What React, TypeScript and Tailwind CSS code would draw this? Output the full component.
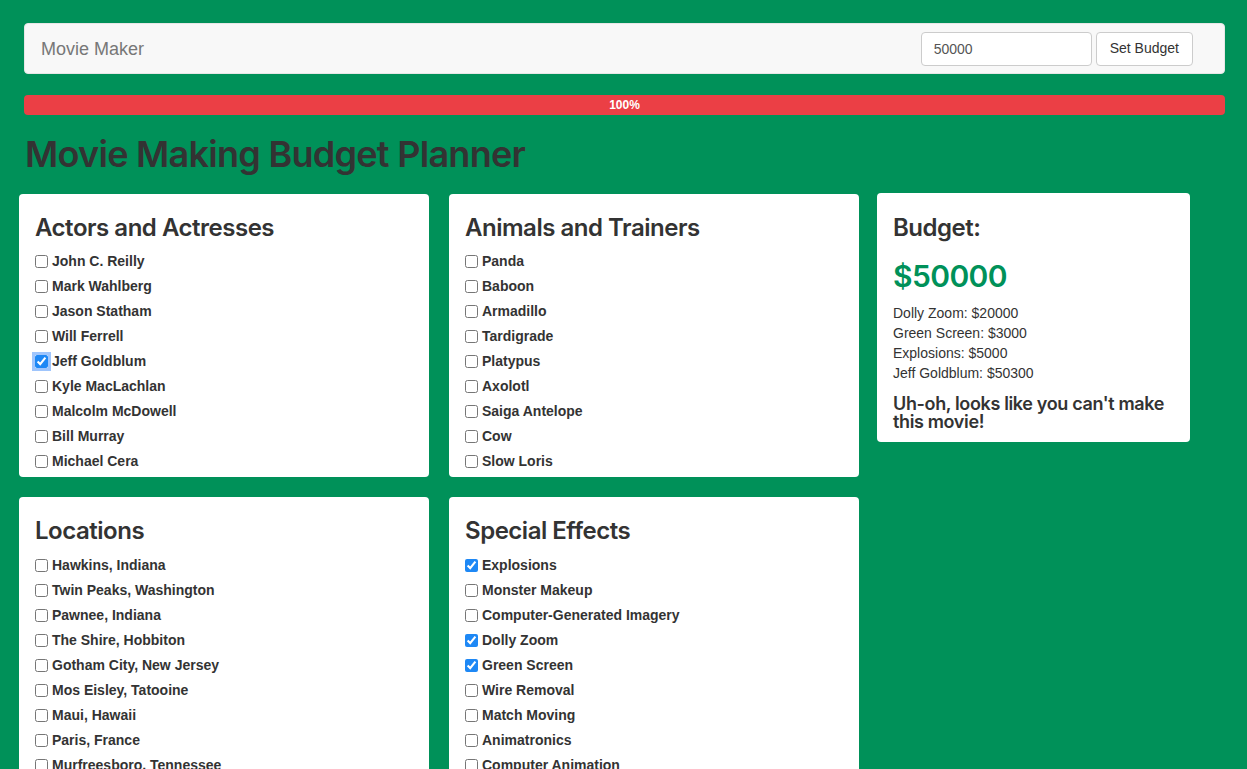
import React, { useState } from 'react';

type Option = { name: string; checked?: boolean; focused?: boolean };

const actors: Option[] = [
  { name: 'John C. Reilly' },
  { name: 'Mark Wahlberg' },
  { name: 'Jason Statham' },
  { name: 'Will Ferrell' },
  { name: 'Jeff Goldblum', checked: true, focused: true },
  { name: 'Kyle MacLachlan' },
  { name: 'Malcolm McDowell' },
  { name: 'Bill Murray' },
  { name: 'Michael Cera' },
];

const animals: Option[] = [
  { name: 'Panda' },
  { name: 'Baboon' },
  { name: 'Armadillo' },
  { name: 'Tardigrade' },
  { name: 'Platypus' },
  { name: 'Axolotl' },
  { name: 'Saiga Antelope' },
  { name: 'Cow' },
  { name: 'Slow Loris' },
];

const locations: Option[] = [
  { name: 'Hawkins, Indiana' },
  { name: 'Twin Peaks, Washington' },
  { name: 'Pawnee, Indiana' },
  { name: 'The Shire, Hobbiton' },
  { name: 'Gotham City, New Jersey' },
  { name: 'Mos Eisley, Tatooine' },
  { name: 'Maui, Hawaii' },
  { name: 'Paris, France' },
  { name: 'Murfreesboro, Tennessee' },
];

const effects: Option[] = [
  { name: 'Explosions', checked: true },
  { name: 'Monster Makeup' },
  { name: 'Computer-Generated Imagery' },
  { name: 'Dolly Zoom', checked: true },
  { name: 'Green Screen', checked: true },
  { name: 'Wire Removal' },
  { name: 'Match Moving' },
  { name: 'Animatronics' },
  { name: 'Computer Animation' },
];

// headings in the shot are a medium weight, Liberation has none
const heading = 'font-["Inter",sans-serif] font-semibold tracking-[-0.02em]';

const Category = ({ title, items }: { title: string; items: Option[] }) => {
  return (
    <div className="w-[410px] bg-white rounded-[4px] px-4 pt-[21px] pb-[5px]">
      <h3 className={`${heading} text-[24px] leading-[1.1] text-[#333] mb-[11px]`}>{title}</h3>
      <ul className="flex flex-col gap-[5px]">
        {items.map((item) => (
          <li key={item.name} className="h-5 flex items-center">
            <input
              type="checkbox"
              defaultChecked={item.checked}
              className={`m-0 w-[13px] h-[13px] accent-[#1e88f5] ${
                item.focused ? 'rounded-[3px] shadow-[0_0_0_3px_rgba(80,150,250,0.55)]' : ''
              }`}
            />
            <label className="ml-[4px] text-[14px] font-bold text-[#333]">{item.name}</label>
          </li>
        ))}
      </ul>
    </div>
  );
};

const App = () => {
  const [budget, setBudget] = useState<string>('50000');

  return (
    <div
      className="min-h-screen bg-[#009159] pt-[23px] pb-10"
      style={{ fontFamily: '"Liberation Sans", Arial, sans-serif' }}
    >
      <div className="ml-6 w-[1201px]">
        <div className="h-[51px] flex items-center justify-between bg-[#f8f8f8] border border-[#e7e7e7] rounded-[4px] pl-4 pr-[31px]">
          <a href="/" className="text-[18px] text-[#777] mt-px">
            Movie Maker
          </a>
          <div className="flex items-center gap-1">
            <input
              type="text"
              value={budget}
              onChange={(e) => setBudget(e.target.value)}
              className="w-[171px] h-[34px] px-3 text-[14px] text-[#555] bg-white border border-[#ccc] rounded-[4px] outline-none"
            />
            <button className="h-[34px] px-[13px] text-[14px] text-[#333] bg-white border border-[#ccc] rounded-[4px]">
              Set Budget
            </button>
          </div>
        </div>

        <div className="mt-[21px] h-5 bg-[#eb3f45] rounded-[4px] flex items-center justify-center">
          <span className="text-[12px] font-bold text-white">100%</span>
        </div>

        <h1 className={`${heading} mt-[20px] ml-px text-[36px] leading-[1.1] text-[#333]`}>
          Movie Making Budget Planner
        </h1>
      </div>

      <div className="mt-[19px] pl-[19px] flex items-start gap-[18px]">
        <div className="flex flex-col gap-5">
          <div className="flex gap-5">
            <Category title="Actors and Actresses" items={actors} />
            <Category title="Animals and Trainers" items={animals} />
          </div>
          <div className="flex gap-5">
            <Category title="Locations" items={locations} />
            <Category title="Special Effects" items={effects} />
          </div>
        </div>

        <div className="-mt-px w-[313px] bg-white rounded-[4px] px-4 pt-[22px] pb-[11px] text-[#333]">
          <h3 className={`${heading} text-[24px] leading-[1.1]`}>Budget:</h3>
          <h2 className={`${heading} mt-[19px] text-[30px] leading-[1.1] text-[#009159]`}>${budget}</h2>
          <div className="mt-[10px] text-[14px] leading-5">
            <p>Dolly Zoom: $20000</p>
            <p>Green Screen: $3000</p>
            <p>Explosions: $5000</p>
            <p>Jeff Goldblum: $50300</p>
          </div>
          <h4 className={`${heading} mt-[12px] text-[18px] leading-none`}>
            Uh-oh, looks like you can't make this movie!
          </h4>
        </div>
      </div>
    </div>
  );
};

export default App;
